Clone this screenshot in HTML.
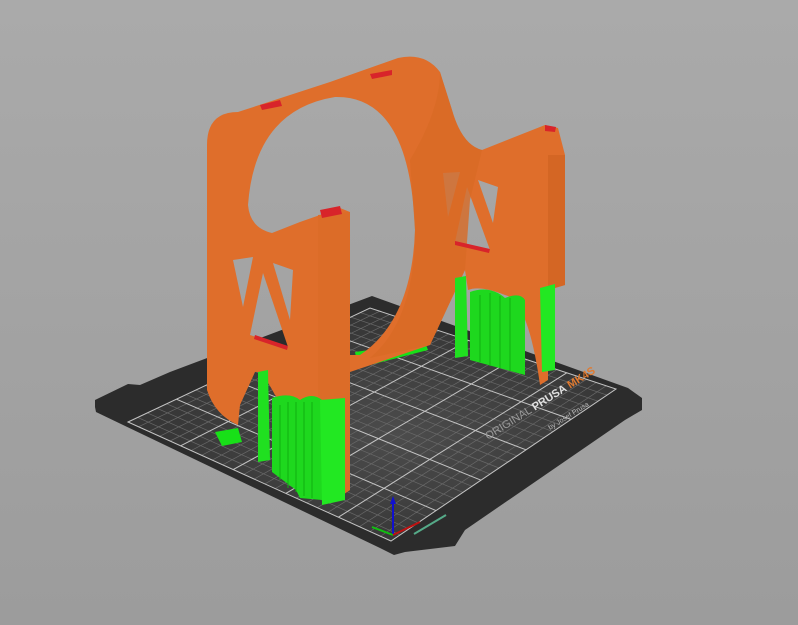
<!DOCTYPE html>
<html><head><style>
html,body{margin:0;padding:0;width:798px;height:625px;overflow:hidden;background:#a3a3a3}
</style></head><body>
<svg width="798" height="625" viewBox="0 0 798 625" xmlns="http://www.w3.org/2000/svg">
<defs>
<linearGradient id="bg" x1="0" y1="0" x2="0" y2="1"><stop offset="0" stop-color="#aaaaaa"/><stop offset="1" stop-color="#9c9c9c"/></linearGradient>
<radialGradient id="bedg" cx="0.55" cy="0.55" r="0.5"><stop offset="0" stop-color="#4c4c4c"/><stop offset="1" stop-color="#363636"/></radialGradient>
</defs>
<rect width="798" height="625" fill="url(#bg)"/>
<!-- bed outer -->
<path d="M95,407 L95,400 L128,384 L140,385 L170,372 L372,296 L628,388 L642,398 L642,410 L625,420 L465,530 L455,546 L405,552 L394,555 L380,548 L96,412 Z" fill="#2c2c2c"/>
<polygon points="128,422 370,308 616,389 391,541" fill="url(#bedg)"/>
<path fill="none" stroke="#686868" stroke-width="0.7" d="
M138.5,426.8L379.8,311.2M149,431.5L389.7,314.5M159.6,436.3L399.5,317.7M170.1,441L409.4,321
M191.1,450.6L429,327.4M201.6,455.3L438.9,330.7M212.2,460.1L448.7,333.9M222.7,464.8L458.6,337.2
M243.7,474.4L478.2,343.6M254.2,479.1L488.1,346.9M264.8,483.9L497.9,350.1M275.3,488.6L507.8,353.4
M296.3,498.2L527.4,359.8M306.8,502.9L537.3,363.1M317.4,507.7L547.1,366.3M327.9,512.4L557,369.6
M348.9,522L576.6,376M359.4,526.7L586.5,379.3M370,531.5L596.3,382.5M380.5,536.2L606.2,385.8
M137.7,417.4L400,534.9M147.4,412.9L409,528.8M157,408.3L418,522.8M166.7,403.8L427,516.7
M186.1,394.6L445,504.5M195.8,390.1L454,498.4M205.4,385.5L463,492.4M215.1,381L472,486.3
M234.5,371.8L490,474.1M244.2,367.3L499,468M253.8,362.7L508,462M263.5,358.2L517,455.9
M282.9,349L535,443.7M292.6,344.5L544,437.6M302.2,339.9L553,431.6M311.9,335.4L562,425.5
M331.3,326.2L580,413.3M341,321.7L589,407.2M350.6,317.1L598,401.2M360.3,312.6L607,395.1"/>
<path fill="none" stroke="#c4c4c4" stroke-width="1" d="
M128,422L391,541L616,389L370,308Z
M180.6,445.8L419.2,324.2M233.2,469.6L468.4,340.4M285.8,493.4L517.6,356.6M338.4,517.2L566.8,372.8
M176.4,399.2L436,510.6M224.8,376.4L481,480.2M273.2,353.6L526,449.8M321.6,330.8L571,419.4"/>
<text x="0" y="0" transform="translate(488,440) rotate(-32)" font-family="Liberation Sans, sans-serif" font-size="11" fill="#9a9a9a">ORIGINAL <tspan fill="#e0e0e0" font-weight="bold">PRUSA</tspan> <tspan fill="#e07a30" font-weight="bold">MK4S</tspan></text>
<text x="0" y="0" transform="translate(550,430) rotate(-32)" font-family="Liberation Sans, sans-serif" font-size="7" fill="#bbbbbb">by Josef Prusa</text>
<!-- axes -->
<line x1="393" y1="535" x2="393" y2="500" stroke="#1010d0" stroke-width="2"/>
<polygon points="393,496 390,504 396,504" fill="#1010d0"/>
<line x1="393" y1="535" x2="372" y2="527" stroke="#10c010" stroke-width="2"/>
<line x1="393" y1="535" x2="420" y2="522" stroke="#c01010" stroke-width="2"/>
<line x1="414" y1="534" x2="446" y2="515" stroke="#55aa88" stroke-width="2"/>
<!-- green on bed -->
<path d="M355,352 L425,342 L428,350 L358,368 Z" fill="#18e018"/>
<path d="M215,432 L238,428 L242,442 L222,446 Z" fill="#18e018"/>
<!-- orange part -->
<path fill-rule="evenodd" fill="#df6e2b" d="M207,145 Q207,112 238,112 L330,82 L398,58 Q425,52 440,72 L452,110 Q462,145 482,150 L545,125 L558,128 L565,155 L565,285 L548,290 L548,380 L540,385 Q528,300 505,295 Q480,285 468,290 L465,270 L430,345 L350,372 L350,490 L335,500 L318,490 L318,410 Q300,395 280,400 L275,395 Q262,370 255,372 L240,405 L238,425 Q215,415 207,390 Z
M248,205 Q255,110 335,97 Q410,95 415,230 Q412,320 360,355 L350,355 L350,212 L340,208 L320,215 L300,222 L272,233 Q250,228 248,205 Z
M233,260 L253,257 L243,307 Z M263,273 L250,335 L288,347 Z M273,263 L293,270 L290,320 Z
M443,173 L460,172 L448,217 Z M467,187 L455,242 L490,250 Z M478,180 L498,187 L493,223 Z"/>
<!-- ring shading -->
<path d="M410,160 Q440,110 440,72 L452,110 Q462,145 482,150 L470,200 L465,270 L430,345 L370,358 Q415,320 415,230 Z" fill="#d86a26" opacity="0.8"/>
<path d="M318,215 L350,212 L350,490 L335,500 L318,490 Z" fill="#dc6c28"/>
<path d="M548,155 L565,155 L565,285 L548,290 Z" fill="#d46624"/>
<!-- red tops -->
<path d="M320,210 L340,206 L342,214 L322,218 Z" fill="#d8242a"/>
<path d="M545,125 L556,127 L555,132 L545,131 Z" fill="#d8242a"/>
<path d="M255,335 L288,346 L287,350 L254,339 Z" fill="#d8242a"/>
<path d="M455,241 L490,249 L489,253 L455,245 Z" fill="#d8242a"/>
<path d="M260,105 L280,100 L282,106 L262,110 Z" fill="#d8242a"/>
<path d="M370,74 L392,70 L392,75 L372,79 Z" fill="#d8242a"/>
<!-- green supports -->
<path d="M258,372 L268,370 L270,460 L258,462 Z" fill="#20e020"/>
<path d="M272,398 Q290,392 300,400 Q312,392 322,400 L322,500 L300,498 L296,490 L272,472 Z" fill="#1ed81e"/>
<path d="M320,400 L345,398 L345,500 L322,505 Z" fill="#22e822"/>
<path d="M455,278 L466,276 L468,356 L455,358 Z" fill="#20e020"/>
<path d="M470,292 Q490,285 505,298 Q520,292 525,300 L525,375 L470,360 Z" fill="#1ed81e"/>
<path d="M540,288 L555,284 L555,370 L542,372 Z" fill="#22e822"/>
<g stroke="#10b010" stroke-width="1">
<line x1="280" y1="405" x2="280" y2="480"/><line x1="288" y1="402" x2="288" y2="488"/><line x1="296" y1="402" x2="296" y2="492"/><line x1="304" y1="402" x2="304" y2="496"/><line x1="312" y1="402" x2="312" y2="498"/>
<line x1="480" y1="295" x2="480" y2="362"/><line x1="490" y1="293" x2="490" y2="366"/><line x1="500" y1="296" x2="500" y2="368"/><line x1="510" y1="298" x2="510" y2="371"/>
</g>
</svg>
</body></html>
